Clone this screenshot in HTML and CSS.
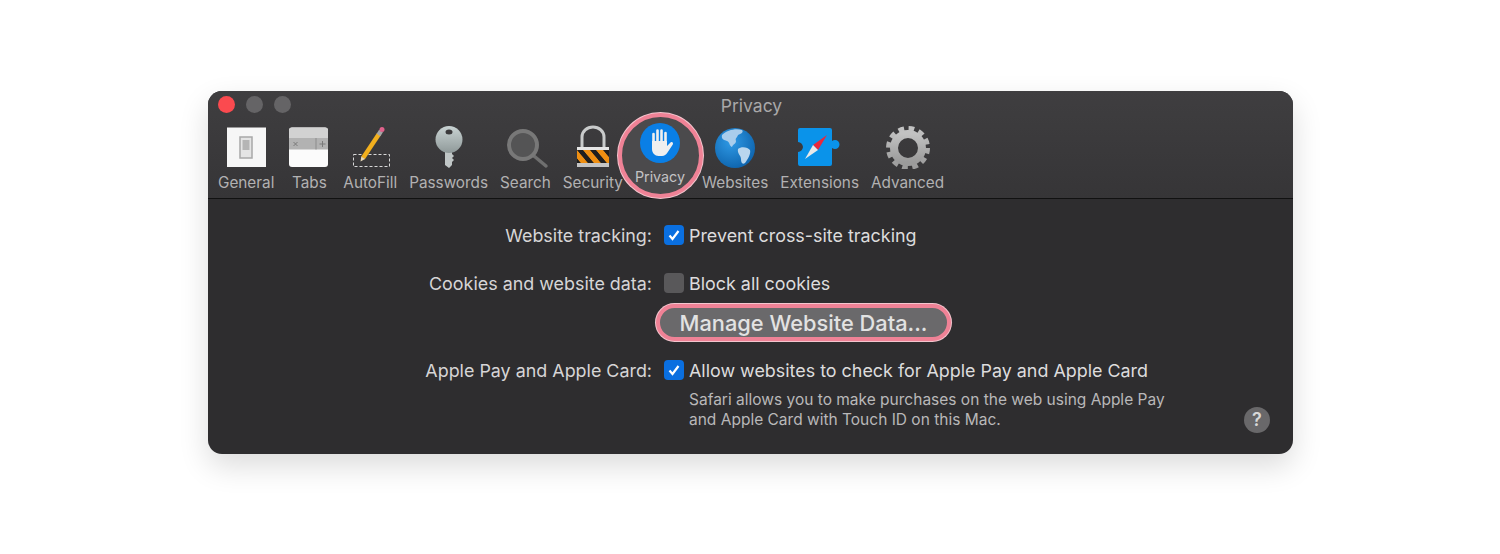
FILE: index.html
```html
<!DOCTYPE html>
<html lang="en">
<head>
<meta charset="UTF-8">
<title>Privacy</title>
<link rel="stylesheet" href="styles.css">
</head>
<body>
<div class="window">
    <div class="toolbar">
        <div class="titlebar">
            <div class="lights">
                <span class="light red"></span>
                <span class="light"></span>
                <span class="light"></span>
            </div>
            <div class="title">Privacy</div>
        </div>
        <div class="tools">
            <div class="tool">
                <svg class="icon" viewBox="0 0 48 44">
                    <rect x="5" y="2.500" width="39" height="39.500" fill="#f6f6f6"/>
                    <rect x="18" y="12" width="12" height="21" fill="#e4e4e4" stroke="#a8a8a8" stroke-width="1.500"/>
                    <rect x="20.500" y="15" width="7" height="10" fill="#b5b5b5"/>
                </svg>
                <span>General</span>
            </div>
            <div class="tool tabs">
                <svg class="icon" viewBox="0 0 48 44">
                    <rect x="4" y="2.500" width="39" height="39.500" rx="3" fill="#fbfbfb"/>
                    <path d="M4 13V5.500a3 3 0 0 1 3-3h33a3 3 0 0 1 3 3V13z" fill="#d2d2d2"/>
                    <rect x="4" y="13" width="39" height="11.500" fill="#b2b2b2"/>
                    <path d="M31 13v11.500" stroke="#8c8c8c"/>
                    <path d="M8.500 17l4 4M12.500 17l-4 4M34.500 19h6M37.500 16v6" stroke="#7a7a7a" fill="none"/>
                </svg>
                <span>Tabs</span>
            </div>
            <div class="tool">
                <svg class="icon" viewBox="0 0 48 44">
                    <rect x="7.500" y="29.500" width="36" height="12" fill="none" stroke="#d8d8d8" stroke-dasharray="3 2"/>
                    <path d="M17 33L33 9" stroke="#f2b01e" stroke-width="4.500"/>
                    <path d="M14.500 36.500l.8-5 3.800 2.500z" fill="#e8d9b8"/>
                    <path d="M32.500 10l2.500-4" stroke="#a5a5a5" stroke-width="4.500"/>
                    <circle cx="36" cy="4.500" r="2.500" fill="#e0628c"/>
                </svg>
                <span>AutoFill</span>
            </div>
            <div class="tool">
                <svg class="icon" viewBox="0 0 48 44">
                    <defs>
                        <linearGradient id="keyGrad" x1="0" y1="0" x2="0" y2="1">
                            <stop offset="0" stop-color="#c9d3d3"/>
                            <stop offset="1" stop-color="#8f9999"/>
                        </linearGradient>
                    </defs>
                    <path d="M20 24h7v5l2 2-2 2 2 2-2 2v3l-3 3-4-3z" fill="#c0c6c6"/>
                    <circle cx="24" cy="14.500" r="13.500" fill="url(#keyGrad)"/>
                    <ellipse cx="24" cy="7" rx="3.500" ry="2.500" fill="#3b3a3c"/>
                </svg>
                <span>Passwords</span>
            </div>
            <div class="tool">
                <svg class="icon" viewBox="0 0 48 44">
                    <path d="M33 31l12 10" stroke="#6f6f6f" stroke-width="3.500" stroke-linecap="round"/>
                    <circle cx="22" cy="20" r="14" fill="#545455" stroke="#787878" stroke-width="4"/>
                </svg>
                <span>Search</span>
            </div>
            <div class="tool">
                <svg class="icon" viewBox="0 0 48 44">
                    <defs>
                        <pattern id="hazard" width="13" height="13" patternUnits="userSpaceOnUse" patternTransform="skewX(40)">
                            <rect width="13" height="13" fill="#ef8f12"/>
                            <rect width="6" height="13" fill="#1f1f1f"/>
                        </pattern>
                    </defs>
                    <path d="M13 23V12a11 10 0 0 1 22 0v11" fill="none" stroke="#c9cbcb" stroke-width="3"/>
                    <rect x="8" y="22" width="32" height="3" fill="#e6e6e6"/>
                    <rect x="8" y="25" width="32" height="13" fill="url(#hazard)"/>
                    <rect x="8" y="38" width="32" height="4" fill="#c4c4c4"/>
                </svg>
                <span>Security</span>
            </div>
            <div class="tool privacy">
                <div class="ring"></div>
                <svg class="icon" viewBox="0 0 48 44">
                    <circle cx="24" cy="20" r="20" fill="#0a7fe6"/>
                    <path d="M17.500 20V11M21.500 20V7.500M25.500 20V7.500M29.500 20V10" stroke="#efefef" stroke-width="2.600" stroke-linecap="round"/>
                    <path d="M16 18h15v5l3.500-3.500c1.500-1.200 3.200.3 2.300 2l-5.300 8c-1.500 2-3 3.500-5.500 3.500h-3.500c-3.500 0-6.500-3-6.500-7z" fill="#efefef"/>
                </svg>
                <span>Privacy</span>
            </div>
            <div class="tool">
                <svg class="icon" viewBox="0 0 48 44">
                    <defs>
                        <radialGradient id="globeGrad" cx="0.400" cy="0.350" r="0.750">
                            <stop offset="0" stop-color="#2f9ae6"/>
                            <stop offset="1" stop-color="#0b5fa8"/>
                        </radialGradient>
                    </defs>
                    <circle cx="24" cy="23" r="20" fill="url(#globeGrad)"/>
                    <path d="M11 10c5-5 14-7 20-5 2 2-1 4-4 5-1 3-3 3-2 6 0 3-3 3-4 6-3-1-2-5-5-6-3-1-6-2-5-6z" fill="#a9cdec"/>
                    <path d="M27 24c3-3 10-2 12 1 1 4-2 9-5 13-3 2-4-1-4-4 0-4-4-5-3-10z" fill="#b9d6ee"/>
                </svg>
                <span>Websites</span>
            </div>
            <div class="tool">
                <svg class="icon" viewBox="0 0 48 44">
                    <path d="M2 5a2 2 0 0 1 2-2h30a2 2 0 0 1 2 2v11a5 5 0 0 1 3-1 4.500 4.500 0 0 1 0 9 5 5 0 0 1-3-1v16a2 2 0 0 1-2 2H4a2 2 0 0 1-2-2V27a6 6 0 0 0 5-5 6 6 0 0 0-5-5z" fill="#0a93ea"/>
                    <path d="M31 10L17 20l5 5z" fill="#e8283c"/>
                    <path d="M9 34l8-14 5 5z" fill="#e9e9e9"/>
                </svg>
                <span>Extensions</span>
            </div>
            <div class="tool">
                <svg class="icon" viewBox="0 0 48 44">
                    <defs>
                        <linearGradient id="gearGrad" x1="0" y1="0" x2="0" y2="1">
                            <stop offset="0" stop-color="#c2c2c2"/>
                            <stop offset="1" stop-color="#9b9b9b"/>
                        </linearGradient>
                    </defs>
                    <circle cx="24" cy="23" r="19" fill="none" stroke="url(#gearGrad)" stroke-width="6" stroke-dasharray="5.500 4.450"/>
                    <circle cx="24" cy="23" r="14" fill="none" stroke="url(#gearGrad)" stroke-width="8"/>
                </svg>
                <span>Advanced</span>
            </div>
        </div>
    </div>

    <div class="prefs">
        <div class="form">
            <div class="row">
                <div class="row-label">Website tracking:</div>
                <div class="check on"><svg viewBox="0 0 20 20"><path d="M5.500 10.500l3 3.500 6-8" /></svg></div>
                <div class="row-text">Prevent cross-site tracking</div>
            </div>
            <div class="row cookies">
                <div class="row-label">Cookies and website data:</div>
                <div class="check"></div>
                <div class="row-text">Block all cookies</div>
            </div>
            <button class="manage">Manage Website Data...</button>
            <div class="row">
                <div class="row-label">Apple Pay and Apple Card:</div>
                <div class="check on"><svg viewBox="0 0 20 20"><path d="M5.500 10.500l3 3.500 6-8" /></svg></div>
                <div class="row-text">Allow websites to check for Apple Pay and Apple Card</div>
            </div>
            <p class="note">Safari allows you to make purchases on the web using Apple Pay<br>and Apple Card with Touch ID on this Mac.</p>
        </div>
        <div class="help">?</div>
    </div>
</div>
</body>
</html>
```

FILE: styles.css
```css
* {
    box-sizing: border-box;
}
body {
    font-family: 'Inter', 'Liberation Sans', sans-serif;
    background-color: #fff;
    margin: 0;
    padding-top: 91px;
    height: 554px;
    overflow: hidden;
}
.window {
    width: 1085px;
    height: 363px;
    margin-left: 208px;
    background: #2e2d2f;
    border-radius: 14px;
    box-shadow: 0 12px 30px rgba(0, 0, 0, 0.14);
    display: flex;
    flex-direction: column;
}
.toolbar {
    height: 108px;
    background: linear-gradient(#3f3e40, #363537);
    border-bottom: 1px solid #111;
    border-radius: 14px 14px 0 0;
}
.titlebar {
    display: flex;
    height: 29px;
    padding: 5px 0 0 10px;
}
.lights {
    display: flex;
    gap: 11px;
}
.light {
    width: 17px;
    height: 17px;
    border-radius: 50%;
    background: #656466;
}
.light.red {
    background: #fb4a4f;
}
.title {
    flex: 1;
    text-align: center;
    font-size: 17.500px;
    line-height: 20px;
    color: #a9a8a9;
    margin-left: -81px;
}
.tools {
    display: flex;
    gap: 12px;
    padding: 5px 0 0 10px;
}
.tool {
    display: flex;
    flex-direction: column;
    align-items: center;
    font-size: 15.300px;
    line-height: 18px;
    color: #b2b1b2;
}
.tool span {
    margin-top: 5px;
}
.tabs {
    width: 44px;
    margin-left: 1px;
}
.icon {
    width: 48px;
    height: 44px;
    display: block;
    flex: none;
}
.privacy {
    position: relative;
    margin-right: 5px;
    color: #c4c3c4;
}
.privacy .icon, .privacy span {
    position: relative;
}
.privacy .icon {
    margin-top: -2px;
}
.privacy span {
    margin-top: 1px;
    font-size: 14.300px;
}
.ring {
    position: absolute;
    left: -17px;
    top: -12px;
    width: 85px;
    height: 85px;
    border-radius: 50%;
    background: #4b4a4c;
    border: 4px solid #ef8296;
    box-shadow: 0 0 0 1px #f4c5ce;
}
.prefs {
    flex: 1;
    display: flex;
    justify-content: space-between;
    padding: 0 23px 21px 0;
}
.form {
    padding-top: 24px;
    color: #dddcdd;
    font-size: 17.900px;
}
.row {
    display: grid;
    grid-template-columns: 444px 20px auto;
    align-items: center;
    height: 24px;
}
.row-label {
    text-align: right;
    color: #d6d5d6;
}
.check {
    width: 20px;
    height: 20px;
    margin-left: 12px;
    border-radius: 4px;
    background: #59585a;
}
.check.on {
    background: #0a6fe0;
}
.check svg {
    display: block;
    fill: none;
    stroke: #fff;
    stroke-width: 2.200;
}
.row-text {
    margin-left: 17px;
}
.cookies {
    margin-top: 24px;
}
.manage {
    display: block;
    margin: 9px 0 17px 448px;
    width: 295px;
    height: 37px;
    padding: 0;
    font: inherit;
    font-size: 21.800px;
    font-weight: 500;
    color: #e2e2e2;
    background: #6a696b;
    border: 4px solid #ef8296;
    border-radius: 19px;
    box-shadow: 0 0 0 1px #f4c5ce;
}
.note {
    margin: 8px 0 0 481px;
    font-size: 15.500px;
    line-height: 20px;
    color: #b9b8b9;
}
.help {
    align-self: flex-end;
    width: 26px;
    height: 26px;
    border-radius: 50%;
    background: #69686a;
    color: #d8d8d8;
    font-size: 18px;
    font-weight: 600;
    line-height: 26px;
    text-align: center;
}
```
